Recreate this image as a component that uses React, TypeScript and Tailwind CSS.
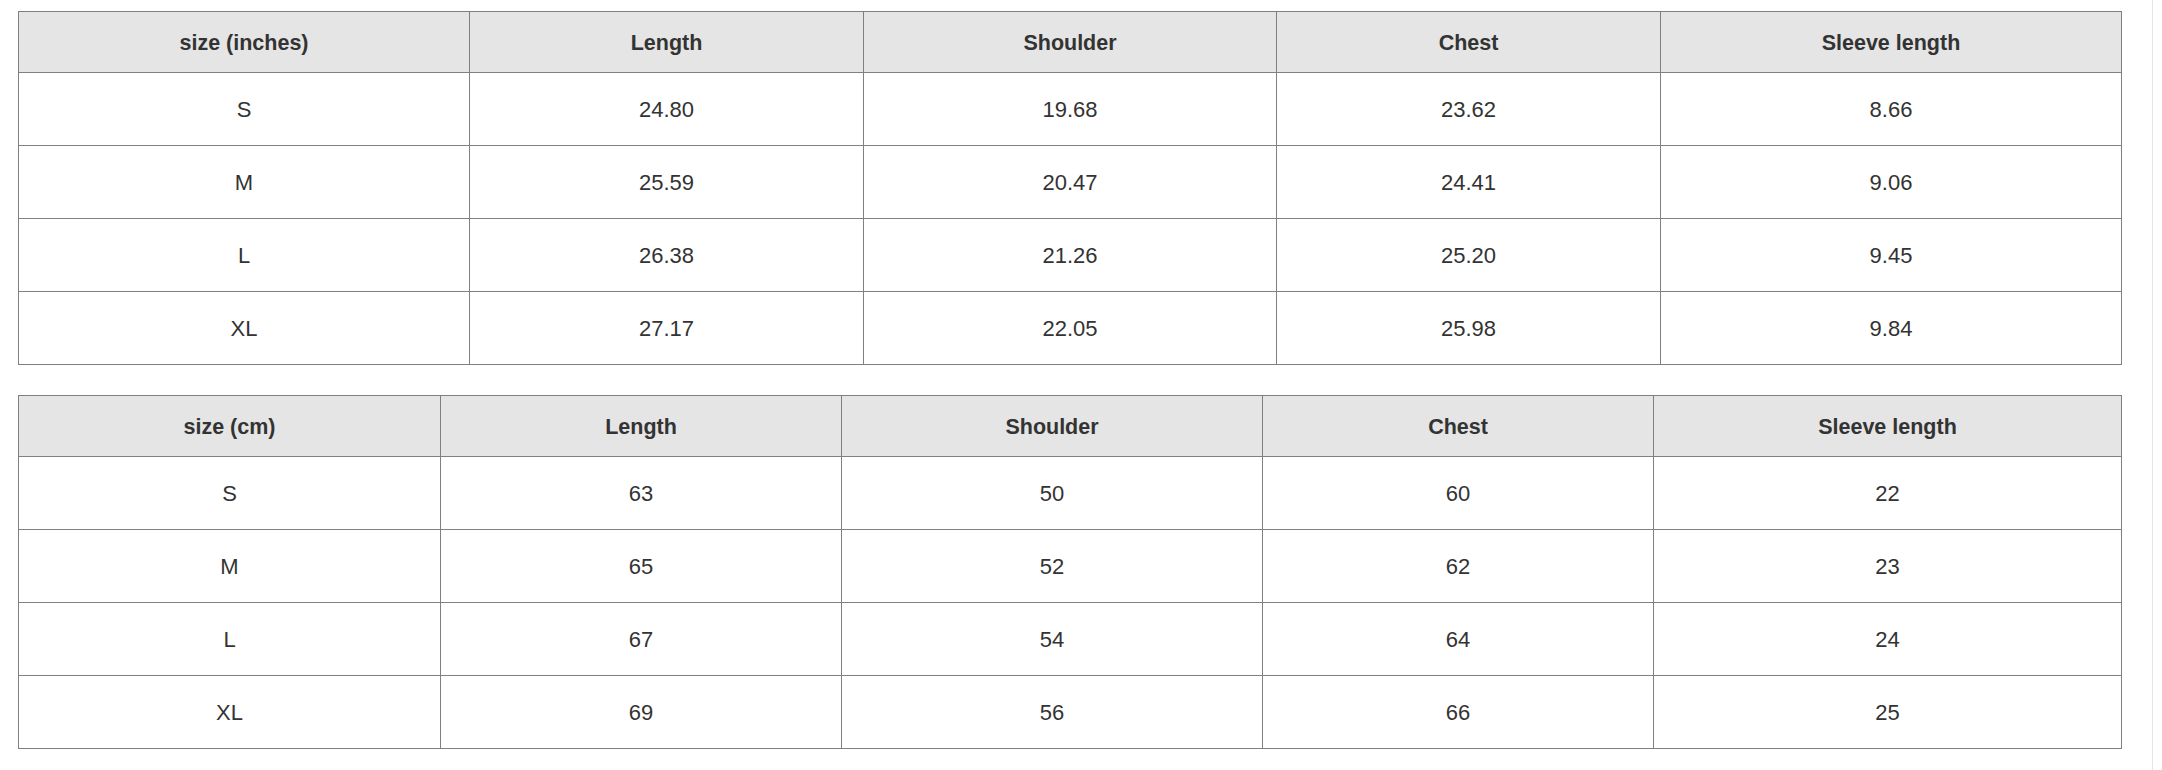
import React from "react";

type TableDef = {
  cols: string;
  headers: string[];
  rows: string[][];
};

const inches: TableDef = {
  cols: "grid-cols-[451px_394px_413px_384px_461px]",
  headers: ["size (inches)", "Length", "Shoulder", "Chest", "Sleeve length"],
  rows: [
    ["S", "24.80", "19.68", "23.62", "8.66"],
    ["M", "25.59", "20.47", "24.41", "9.06"],
    ["L", "26.38", "21.26", "25.20", "9.45"],
    ["XL", "27.17", "22.05", "25.98", "9.84"],
  ],
};

const cm: TableDef = {
  cols: "grid-cols-[422px_401px_421px_391px_468px]",
  headers: ["size (cm)", "Length", "Shoulder", "Chest", "Sleeve length"],
  rows: [
    ["S", "63", "50", "60", "22"],
    ["M", "65", "52", "62", "23"],
    ["L", "67", "54", "64", "24"],
    ["XL", "69", "56", "66", "25"],
  ],
};

function SizeTable({ def }: { def: TableDef }) {
  return (
    <div className={`grid ${def.cols} w-[2104px] border-t border-l border-[#808080]`}>
      {def.headers.map((h, i) => (
        <div
          key={"h" + i}
          className="h-[61px] flex items-center justify-center bg-[#e5e5e5] border-r border-b border-[#808080] font-bold text-[21.5px] text-[#333333] pt-[2px]"
        >
          {h}
        </div>
      ))}
      {def.rows.map((r, ri) =>
        r.map((c, ci) => (
          <div
            key={ri + "-" + ci}
            className="h-[73px] flex items-center justify-center bg-white border-r border-b border-[#808080] text-[22px] text-[#333333]"
          >
            {c}
          </div>
        ))
      )}
    </div>
  );
}

export default function App() {
  return (
    <div
      className="flex h-[770px] w-full bg-white overflow-hidden"
      style={{ fontFamily: '"Liberation Sans", Arial, Helvetica, sans-serif' }}
    >
      <div className="w-[2152px] shrink-0 pl-[18px] pt-[11px] flex flex-col gap-[30px]">
        <SizeTable def={inches} />
        <SizeTable def={cm} />
      </div>
      <div className="flex-1 border-l border-[#e6e6e6]" />
    </div>
  );
}
